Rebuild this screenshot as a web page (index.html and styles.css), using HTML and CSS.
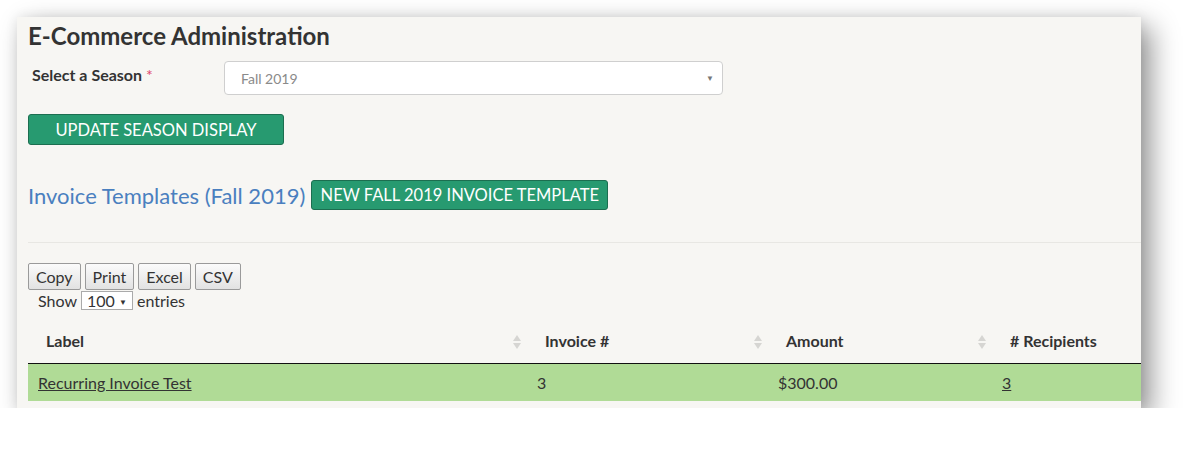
FILE: index.html
```html
<!DOCTYPE html>
<html lang="en">
<head>
  <meta charset="UTF-8" />
  <title>E-Commerce Administration</title>
  <link rel="stylesheet" href="styles.css">
</head>
<body>
  <div class="panel">
    <h1 class="title">E-Commerce Administration</h1>

    <div class="season-row">
      <label class="season-label">Select a Season <span class="req">*</span></label>
      <div class="season-select">
        <span>Fall 2019</span>
        <span class="caret">&#9660;</span>
      </div>
    </div>

    <button class="btn-green btn-update">UPDATE SEASON DISPLAY</button>

    <div class="templates-row">
      <h2 class="templates-title">Invoice Templates (Fall 2019)</h2>
      <button class="btn-green btn-new">NEW FALL 2019 INVOICE TEMPLATE</button>
    </div>

    <hr class="divider" />

    <div class="export-buttons">
      <button class="btn-export">Copy</button>
      <button class="btn-export">Print</button>
      <button class="btn-export">Excel</button>
      <button class="btn-export">CSV</button>
    </div>

    <div class="length-row">
      Show
      <span class="length-select">100 <span class="small-caret">&#9660;</span></span>
      entries
    </div>

    <table class="data-table">
      <thead>
        <tr>
          <th class="col-label">Label <svg class="sort" width="8" height="14" viewBox="0 0 8 14"><path d="M4 0 L8 6 L0 6 Z" fill="#d6d5d2"/><path d="M0 8 L8 8 L4 14 Z" fill="#d6d5d2"/></svg></th>
          <th class="col-invoice">Invoice # <svg class="sort" width="8" height="14" viewBox="0 0 8 14"><path d="M4 0 L8 6 L0 6 Z" fill="#d6d5d2"/><path d="M0 8 L8 8 L4 14 Z" fill="#d6d5d2"/></svg></th>
          <th class="col-amount">Amount <svg class="sort" width="8" height="14" viewBox="0 0 8 14"><path d="M4 0 L8 6 L0 6 Z" fill="#d6d5d2"/><path d="M0 8 L8 8 L4 14 Z" fill="#d6d5d2"/></svg></th>
          <th class="col-recipients"># Recipients</th>
        </tr>
      </thead>
      <tbody>
        <tr>
          <td><a href="#">Recurring Invoice Test</a></td>
          <td>3</td>
          <td>$300.00</td>
          <td><a href="#">3</a></td>
        </tr>
      </tbody>
    </table>
  </div>
</body>
</html>
```

FILE: styles.css
```css
body {
  margin: 0;
  background: #ffffff;
  font-family: Lato, "Open Sans", sans-serif;
  color: #333;
}

.panel {
  width: 1113px;
  height: 391px;
  margin: 17px 0 0 17px;
  padding-left: 11px;
  background: #f7f6f3;
  overflow: hidden;
  box-shadow: 10px 10px 26px rgba(0,0,0,0.42), 0 0 12px rgba(0,0,0,0.08);
}

.title {
  margin: 0;
  padding-top: 4px;
  font-size: 24px;
  font-weight: 700;
  line-height: 30px;
  color: #333;
}

.season-row {
  display: flex;
  align-items: flex-start;
  margin-top: 10px;
}

.season-label {
  width: 192px;
  padding: 4px 0 0 4px;
  line-height: 20px;
  font-size: 16px;
  font-weight: 700;
}

.req {
  color: #e0446b;
  font-weight: 400;
}

.season-select {
  box-sizing: border-box;
  width: 499px;
  height: 34px;
  display: flex;
  align-items: center;
  justify-content: space-between;
  padding: 0 8px 0 16px;
  background: #fff;
  border: 1px solid #cfcfcf;
  border-radius: 4px;
  font-size: 14px;
  color: #8a8a8a;
}

.caret {
  font-size: 8px;
  color: #777;
}

.btn-green {
  background: #279a70;
  border: 1px solid #1c6e50;
  border-radius: 3px;
  color: #fff;
  font-family: Lato, sans-serif;
  font-size: 16.5px;
  padding: 0;
  cursor: pointer;
}

.btn-update {
  display: block;
  width: 256px;
  height: 31px;
  margin-top: 19px;
}

.templates-row {
  display: flex;
  align-items: center;
  margin-top: 35px;
}

.templates-title {
  margin: 0 6px 0 0;
  font-size: 22px;
  font-weight: 400;
  color: #4a7fbf;
}

.btn-new {
  width: 297px;
  height: 30px;
}

.divider {
  margin: 32px 0 0 0;
  border: none;
  border-top: 1px solid #e8e7e3;
}

.export-buttons {
  display: flex;
  gap: 4px;
  margin-top: 20px;
}

.btn-export {
  height: 27px;
  padding: 0 7px;
  font-family: Lato, sans-serif;
  font-size: 16px;
  color: #333;
  background: linear-gradient(#fbfbfb, #e2e2e2);
  border: 1px solid #9a9a9a;
  border-radius: 2px;
}

.length-row {
  display: flex;
  align-items: center;
  gap: 4px;
  padding-left: 10px;
  font-size: 16px;
  height: 20px;
}

.length-select {
  width: 45px;
  height: 17px;
  line-height: 17px;
  padding-left: 5px;
  background: #fff;
  border: 1px solid #aaa;
  font-size: 16px;
}

.small-caret {
  font-size: 8px;
  vertical-align: 2px;
}

.data-table {
  width: 1113px;
  margin-top: 15px;
  border-collapse: collapse;
  table-layout: fixed;
  font-size: 16px;
}

.data-table th,
.data-table td {
  box-sizing: border-box;
}

.data-table th {
  position: relative;
  height: 38px;
  padding: 0 18px 6px;
  text-align: left;
  font-weight: 700;
  white-space: nowrap;
  border-bottom: 1px solid #111;
}

.sort {
  position: absolute;
  right: 6px;
  top: 10px;
}

.col-label { width: 499px; }
.col-invoice { width: 241px; }
.col-amount { width: 224px; }

.data-table td {
  height: 38px;
  padding: 0 10px;
  background: #b0db96;
  color: #333;
}

.data-table a {
  color: #333;
}
```
